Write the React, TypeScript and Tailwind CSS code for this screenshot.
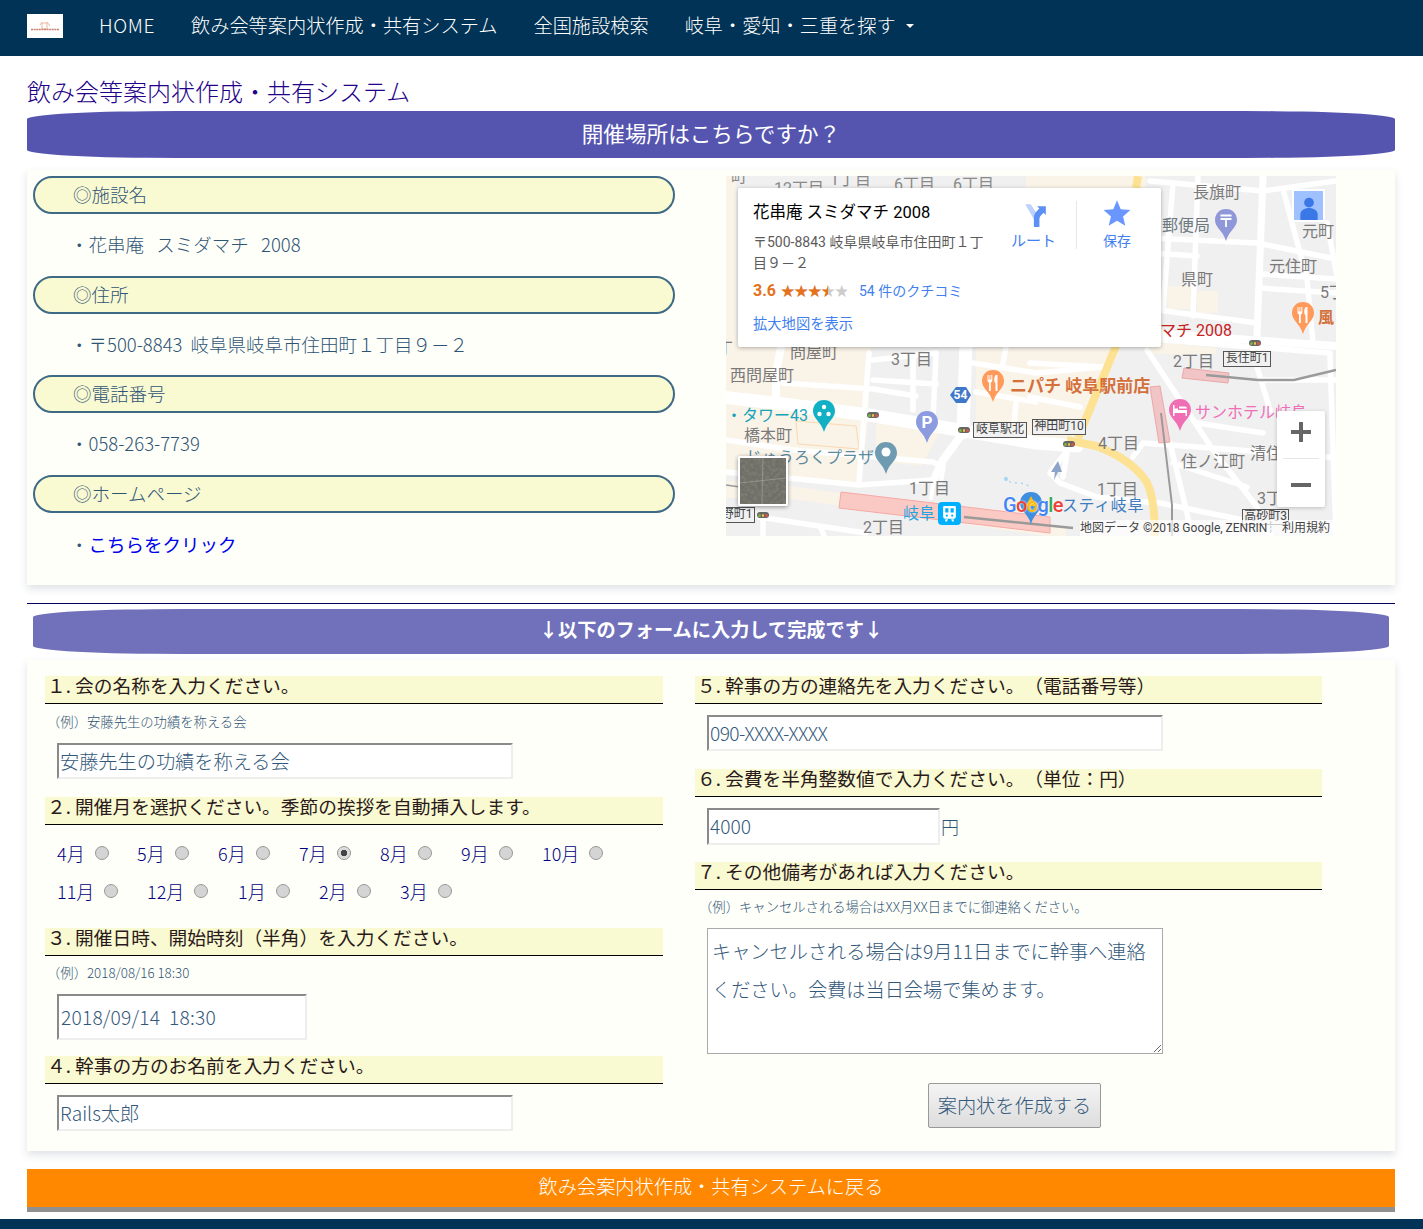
const jp = "font-['Noto_Sans_CJK_JP','Liberation_Sans',sans-serif]"

const navItems = ['飲み会等案内状作成・共有システム', '全国施設検索']

const facility = [
	{ title: '◎施設名', value: '・花串庵   スミダマチ   2008' },
	{ title: '◎住所', value: '・〒500-8843  岐阜県岐阜市住田町１丁目９－２' },
	{ title: '◎電話番号', value: '・058-263-7739' },
]

const months = [
	[
		{ label: '4月', w: 'w-[80px]' },
		{ label: '5月', w: 'w-[81px]' },
		{ label: '6月', w: 'w-[81px]' },
		{ label: '7月', w: 'w-[81px]', checked: true },
		{ label: '8月', w: 'w-[81px]' },
		{ label: '9月', w: 'w-[81px]' },
		{ label: '10月', w: 'w-[90px]' },
	],
	[
		{ label: '11月', w: 'w-[90px]' },
		{ label: '12月', w: 'w-[91px]' },
		{ label: '1月', w: 'w-[81px]' },
		{ label: '2月', w: 'w-[81px]' },
		{ label: '3月', w: 'w-[81px]' },
	],
]

const mapLabels = [
	{ text: '町', c: 'left-[5px] top-[-9px] text-[#8a8a8a]' },
	{ text: '丁', c: 'left-[-9px] top-[163px] text-[#7a7a7a]' },
	{ text: '12丁目', c: 'left-[48px] top-[3px] text-[#8a8a8a]' },
	{ text: '1丁目', c: 'left-[104px] top-[-6px] text-[#8a8a8a]' },
	{ text: '6丁目', c: 'left-[168px] top-[-1px] text-[#8a8a8a]' },
	{ text: '6丁目', c: 'left-[227px] top-[-1px] text-[#8a8a8a]' },
	{ text: '長旗町', c: 'left-[467px] top-[7px] text-[#7a7a7a]' },
	{ text: '郵便局', c: 'left-[436px] top-[40px] text-[#6c7a80]' },
	{ text: '元町', c: 'left-[576px] top-[46px] text-[#7a7a7a]' },
	{ text: '元住町', c: 'left-[543px] top-[81px] text-[#7a7a7a]' },
	{ text: '県町', c: 'left-[455px] top-[94px] text-[#7a7a7a]' },
	{ text: '5丁', c: 'left-[594px] top-[107px] text-[#7a7a7a]' },
	{ text: '風', c: 'left-[592px] top-[132px] text-[#d4703a] font-bold' },
	{ text: 'マチ 2008', c: 'left-[434px] top-[145px] text-[#c5221f]' },
	{ text: '問屋町', c: 'left-[64px] top-[167px] text-[#7a7a7a]' },
	{ text: '3丁目', c: 'left-[165px] top-[174px] text-[#7a7a7a]' },
	{ text: '2丁目', c: 'left-[447px] top-[176px] text-[#7a7a7a]' },
	{ text: '西問屋町', c: 'left-[4px] top-[190px] text-[#7a7a7a]' },
	{ text: 'ニパチ 岐阜駅前店', c: 'left-[284px] top-[200px] text-[#d4703a] font-bold text-[17px]' },
	{ text: '・タワー43', c: 'left-[0px] top-[230px] text-[#16a3b8]' },
	{ text: '橋本町', c: 'left-[18px] top-[250px] text-[#7a7a7a]' },
	{ text: 'じゅうろくプラザ', c: 'left-[20px] top-[272px] text-[#5d8a9e]' },
	{ text: '4丁目', c: 'left-[372px] top-[258px] text-[#7a7a7a]' },
	{ text: 'サンホテル岐阜', c: 'left-[469px] top-[227px] text-[#ee6fb8]' },
	{ text: '住ノ江町', c: 'left-[455px] top-[276px] text-[#7a7a7a]' },
	{ text: '清住', c: 'left-[524px] top-[268px] text-[#7a7a7a]' },
	{ text: '1丁目', c: 'left-[183px] top-[303px] text-[#7a7a7a]' },
	{ text: '1丁目', c: 'left-[371px] top-[304px] text-[#7a7a7a]' },
	{ text: '3丁', c: 'left-[531px] top-[313px] text-[#7a7a7a]' },
	{ text: '2丁目', c: 'left-[137px] top-[342px] text-[#7a7a7a]' },
	{ text: '岐阜', c: 'left-[177px] top-[328px] text-[#25a4e0]' },
	{ text: 'スティ岐阜', c: 'left-[336px] top-[320px] text-[#3f7cc0] tracking-[0.6px]' },
]

const mapBoxes = [
	{ text: '長住町1', c: 'left-[497px] top-[175px] w-[48px]' },
	{ text: '岐阜駅北', c: 'left-[247px] top-[246px] w-[54px]' },
	{ text: '神田町10', c: 'left-[306px] top-[243px] w-[54px]' },
	{ text: '野町1', c: 'left-[-7px] top-[331px] w-[36px]' },
	{ text: '高砂町3', c: 'left-[516px] top-[333px] w-[47px]' },
]

const signals = [
	'left-[141px] top-[236px]',
	'left-[232px] top-[251px]',
	'left-[337px] top-[265px]',
	'left-[31px] top-[336px]',
	'left-[523px] top-[164px]',
]

function Pin({ color, className, children }: { color: string; className: string; children?: React.ReactNode }) {
	return (
		<svg viewBox="0 0 24 34" className={`absolute w-[24px] h-[34px] ${className}`}>
			<path d="M12 1C5.500 1 1 5.800 1 12c0 7.500 8 10.500 11 21 3-10.500 11-13.500 11-21C23 5.800 18.500 1 12 1z" fill={color} />
			{children}
		</svg>
	)
}

function Fork() {
	return <path d="M6.500 6v5.500a2 2 0 0 0 1.500 2V22h1.800v-8.500a2 2 0 0 0 1.500-2V6h-1v4.500h-1V6h-.8v4.500h-1V6zM15 6c-2 1.500-2.500 6-.5 8.500V22h2V6z" fill="#fff" />
}

function MapRoads() {
	return (
		<svg viewBox="0 0 610 360" className="absolute inset-0 w-full h-full">
			<rect width="610" height="360" fill="#f0f0f0" />
			{/* built up blocks */}
			<g fill="#faf3e8">
				<path d="M0 164 L145 164 L143 240 L133 308 L60 300 L0 300z" />
				<path d="M250 172 L395 172 L352 262 L300 262 L285 262 L250 250z" />
				<path d="M150 245 L215 255 L195 290 L150 285z" />
				<path d="M0 305 L64 310 L340 350 L340 360 L320 360 L60 322 L0 322z" />
				<path d="M441 110 L467 110 L467 133 L441 133z" />
				<path d="M471 115 L492 115 L492 137 L471 137z" />
				<path d="M424 165 L490 172 L490 178 L424 178z" />
				<path d="M0 0 L10 0 L10 170 L0 170z" />
				<path d="M300 0 L420 0 L420 12 L300 12z" />
			</g>
			<path d="M70 245 L130 250 L133 273 L72 268z" fill="none" stroke="#fbd9b0" />
			<g stroke="#ffffff" fill="none" strokeLinejoin="round" strokeLinecap="round">
				<g strokeWidth="13">
					<path d="M-5 221 L50 227 L143 239 L233 254 L310 267 L351 270" />
					<path d="M240 165 L237 257" />
				</g>
				<g strokeWidth="8">
					<path d="M55 171 L50 197 L50 227" />
					<path d="M237 257 L217 284 L208 304" />
					<path d="M424 157 L610 170" />
				</g>
				<g strokeWidth="5.500">
					<path d="M0 264 L67 274 L150 281 L207 286 L215 290" />
					<path d="M143 177 L133 307" />
					<path d="M0 296 L133 309 L207 304" />
					<path d="M57 207 L147 213 L190 220" />
					<path d="M147 184 L210 177 M147 204 L210 208" />
					<path d="M187 181 L187 234 M210 177 L207 244" />
					<path d="M247 187 L310 197 L377 191 M280 171 L277 187" />
					<path d="M304 221 L354 231 M250 216 L310 226 M290 227 L287 257" />
					<path d="M304 187 L377 191" />
					<path d="M33 341 L140 357 M37 344 L37 360 M95 352 L98 360" />
					<path d="M421 174 L487 274 L531 331 L545 360" />
					<path d="M531 191 L544 234" />
					<path d="M407 281 L417 267 L554 277 L610 282" />
					<path d="M444 267 L461 337 L465 360" />
					<path d="M447 287 L521 311 M434 327 L517 344 L610 350 M471 247 L537 257" />
					<path d="M344 271 L324 297 L334 307 L371 321 L431 327" />
					<path d="M341 277 L337 301" />
					<path d="M437 164 L604 177 M534 204 L610 204" />
					<path d="M604 180 L610 360" />
					<path d="M424 5 L537 15 L610 5" />
					<path d="M447 7 L437 133 M472 0 L467 140 M557 13 L581 103 L587 167 M601 47 L611 100" />
					<path d="M424 62 L531 67 L610 83 M424 77 L471 80 M534 98 L610 103 M534 112 L610 117 M424 133 L531 147" />
				</g>
				<path d="M537 0 L531 160 L527 172" strokeWidth="7" />
				<path d="M208 304 L205 322 M218 290 L215 306" strokeWidth="4" />
			</g>
			<g stroke="#fde293" strokeWidth="8" fill="none" strokeLinejoin="round">
				<path d="M412 0 L410 12" />
				<path d="M392 165 L352 262" />
				<path d="M341 264 L370 270 Q405 283 420 305 Q429 320 429 362" />
			</g>
			<g strokeWidth="1">
				<path d="M115 316 L324 341 L324 357 L113 332z" fill="#fbc9c3" stroke="#f4a9a4" />
				<path d="M458 192 L503 197 L502 207 L456 202z" fill="#f1c5c5" stroke="#eaa8a8" />
				<path d="M424 211 L434 210 L444 266 L433 267z" fill="#f1c5c5" stroke="#eaa8a8" />
			</g>
			<g fill="none" stroke="#9a9a9a">
				<path d="M238 341 L347 352" strokeWidth="2.500" />
				<path d="M480 199 L532 204 L568 204 L610 194" strokeWidth="2.500" />
				<path d="M435 237 L446 329 L446 360" strokeWidth="2" />
				<path d="M0 309 L14 311" strokeWidth="1.500" />
			</g>
			<path d="M332 285 L325 296 L329 296 L328 304 L332 296 L336 296z" fill="#8ea3c9" />
			<path d="M279 301 Q282 306 288 307 Q298 306 306 312" stroke="#a8d4f2" strokeWidth="1.500" strokeDasharray="2 4" fill="none" />
			<circle cx="280" cy="303" r="2" fill="#a8d4f2" />
			<path d="M224 219 L230 211 L240 211 L245 219 L240 227 L230 227z" fill="#3f78c8" />
		</svg>
	)
}

function GoogleMap() {
	return (
		<div className="relative w-[610px] h-[360px] shrink-0 overflow-hidden font-['Roboto','Noto_Sans_CJK_JP',sans-serif] font-normal">
			<MapRoads />

			{mapLabels.map(({ text, c }, index) => (
				<span key={index} className={`absolute whitespace-nowrap text-[16px] leading-[20px] ${c}`}>
					{text}
				</span>
			))}
			{mapBoxes.map(({ text, c }, index) => (
				<span key={index} className={`absolute h-[16px] bg-[#f1f1f1] border-[1.5px] border-[#555] text-[#444] text-[12px] leading-[13px] text-center whitespace-nowrap ${c}`}>
					{text}
				</span>
			))}
			{signals.map((c, index) => (
				<span key={index} className={`absolute w-[12px] h-[6px] rounded-full bg-[#666] flex items-center justify-center gap-px ${c}`}>
					<span className="w-[2.500px] h-[3px] rounded-full bg-[#7cb342]" />
					<span className="w-[2.500px] h-[3px] rounded-full bg-[#e8c547]" />
					<span className="w-[2.500px] h-[3px] rounded-full bg-[#d9534f]" />
				</span>
			))}

			<span className="absolute left-[224px] w-[21px] text-center top-[213px] text-white text-[12px] leading-[12px] font-bold">54</span>

			<Pin color="#8f97d8" className="left-[488px] top-[32px]">
				<path d="M6.500 7.500h11M6.500 11h11M12 11v8" stroke="#fff" strokeWidth="1.800" fill="none" />
			</Pin>
			<Pin color="#ff9a5a" className="left-[565px] top-[125px]"><Fork /></Pin>
			<Pin color="#ff9a5a" className="left-[255px] top-[193px]"><Fork /></Pin>
			<Pin color="#12b0c4" className="left-[86px] top-[223px]">
				<circle cx="12" cy="8" r="2.200" fill="#fff" />
				<circle cx="7.500" cy="15" r="2.200" fill="#fff" />
				<circle cx="16.500" cy="15" r="2.200" fill="#fff" />
			</Pin>
			<Pin color="#8c9be0" className="left-[189px] top-[234px]">
				<text x="12" y="18" textAnchor="middle" fontSize="17" fontWeight="700" fill="#fff">P</text>
			</Pin>
			<Pin color="#6f9bb0" className="left-[148px] top-[265px]">
				<circle cx="12" cy="11" r="4.500" fill="#fff" />
			</Pin>
			<Pin color="#f06fb4" className="left-[442px] top-[222px]">
				<path d="M5 7v11h1.500v-3h11v3H19v-6h-9v-1.500H6.500V7zM11 8.500h6a2 2 0 0 1 2 2H11z" fill="#fff" />
			</Pin>
			<Pin color="#3f8fe0" className="left-[293px] top-[315px]">
				<path d="M12 5l5 10H7z" fill="#fbbc05" />
			</Pin>

			<div className="absolute left-[212px] top-[326px] w-[23px] h-[23px] rounded-[4px] bg-[#00b0ff] flex items-center justify-center">
				<svg viewBox="0 0 16 16" className="w-[17px] h-[17px]">
					<path d="M3 1h10a1 1 0 0 1 1 1v9a2 2 0 0 1-2 2H4a2 2 0 0 1-2-2V2a1 1 0 0 1 1-1zM4 3v4h3V3zM9 3v4h3V3z" fill="#fff" fillRule="evenodd" />
					<circle cx="5.500" cy="10" r="1" fill="#00b0ff" />
					<circle cx="10.500" cy="10" r="1" fill="#00b0ff" />
					<path d="M4 13.500h2.500L5.500 15.500H4zM12 13.500H9.500l1 2H12z" fill="#fff" />
				</svg>
			</div>

			{/* info window */}
			<div className="absolute left-[12px] top-[12px] w-[423px] h-[159px] bg-white shadow-[0_1px_4px_rgba(0,0,0,0.3)] rounded-[2px]">
				<p className="absolute left-[15px] top-[15px] text-[16.500px] leading-[20px] text-black whitespace-nowrap">花串庵 スミダマチ 2008</p>
				<p className="absolute left-[15px] top-[44px] w-[240px] text-[14px] leading-[21px] text-[#5b5b5b]">〒500-8843 岐阜県岐阜市住田町１丁目９－２</p>
				<p className="absolute left-[15px] top-[93px] text-[16px] leading-[20px] font-bold text-[#e7711b]">3.6</p>
				<div className="absolute left-[43px] top-[93px] text-[13.500px] leading-[20px] w-[66px] overflow-hidden whitespace-nowrap text-[#ccc]">
					<span>★★★★★</span>
					<span className="absolute left-0 top-0 w-[47px] overflow-hidden text-[#e7711b]">★★★★★</span>
				</div>
				<p className="absolute left-[121px] top-[93px] text-[14px] leading-[20px] text-[#427fed] whitespace-nowrap">54 件のクチコミ</p>
				<p className="absolute left-[15px] top-[126px] text-[14.300px] leading-[20px] text-[#427fed] whitespace-nowrap">拡大地図を表示</p>

				<svg viewBox="0 0 24 24" className="absolute left-[284px] top-[14px] w-[26px] h-[26px]">
					<path d="M3 2h5l8 12v9h-5v-7z" fill="#bcd2fb" />
					<path d="M11 23v-9c0-3 2-5 5-8l-2-2h8v8l-2-2c-2.500 2-4 4-4 6v7z" fill="#5c90f5" />
				</svg>
				<p className="absolute left-[273px] top-[43px] text-[15px] leading-[20px] text-[#427fed] whitespace-nowrap">ルート</p>
				<div className="absolute left-[338px] top-[13px] w-px h-[48px] bg-[#e8e8e8]" />
				<svg viewBox="0 0 24 24" className="absolute left-[365px] top-[11px] w-[28px] h-[28px]">
					<path d="M12 1l3.200 7.800 8.300.7-6.300 5.400 1.900 8.100L12 18.700 4.900 23l1.900-8.100L.5 9.500l8.300-.7z" fill="#6a97ff" />
				</svg>
				<p className="absolute left-[365px] top-[43px] text-[14px] leading-[20px] text-[#427fed] whitespace-nowrap">保存</p>
			</div>

			{/* pegman */}
			<div className="absolute left-[566px] top-[13px] w-[33px] h-[33px] bg-[#9fc1ff] border-[2px] border-white flex items-end justify-center">
				<svg viewBox="0 0 24 24" className="w-[26px] h-[26px]">
					<circle cx="12" cy="8" r="4.500" fill="#3b78e7" />
					<path d="M4 24v-5c0-4 4-6 8-6s8 2 8 6v5z" fill="#3b78e7" />
				</svg>
			</div>

			{/* zoom control */}
			<div className="absolute left-[551px] top-[235px] w-[48px] h-[96px] bg-white rounded-[2px] shadow-[0_1px_4px_rgba(0,0,0,0.2)] flex flex-col items-center">
				<svg viewBox="0 0 24 24" className="w-[24px] h-[24px] mt-[9px]">
					<path d="M10 2h4v8h8v4h-8v8h-4v-8H2v-4h8z" fill="#666" />
				</svg>
				<div className="w-[36px] h-px bg-[#e6e6e6] mt-[14px]" />
				<svg viewBox="0 0 24 24" className="w-[24px] h-[24px] mt-[14px]">
					<path d="M2 10h20v4H2z" fill="#666" />
				</svg>
			</div>

			{/* satellite thumbnail */}
			<div className="absolute left-[12px] top-[280px] w-[50px] h-[50px] border-[2px] border-white rounded-[2px] overflow-hidden shadow-[0_1px_4px_rgba(0,0,0,0.4)]">
				<svg viewBox="0 0 46 46" className="w-full h-full">
					<filter id="sat">
						<feTurbulence type="fractalNoise" baseFrequency="0.28" numOctaves="2" seed="7" />
						<feColorMatrix values="0 0 0 0 0.16  0 0 0 0 0.16  0 0 0 0 0.14  3 0 0 0 -0.8" />
					</filter>
					<rect width="46" height="46" fill="#7c7c70" />
					<rect width="46" height="46" filter="url(#sat)" />
					<path d="M23 0 L22 46 M0 25 L46 20" stroke="#a8a89c" strokeWidth="0.600" />
				</svg>
			</div>

			{/* google logo + attribution */}
			<span className="absolute left-[277px] top-[316px] text-[20px] leading-[26px] font-medium tracking-[-0.600px] [text-shadow:0_0_2px_#fff]">
				<span className="text-[#4285f4]">G</span>
				<span className="text-[#ea4335]">o</span>
				<span className="text-[#fbbc05]">o</span>
				<span className="text-[#4285f4]">g</span>
				<span className="text-[#34a853]">l</span>
				<span className="text-[#ea4335]">e</span>
			</span>
			<div className="absolute right-0 bottom-0 h-[16px] w-[256px] bg-white/70 text-[12px] leading-[16px] text-[#444] flex justify-between pr-[6px] whitespace-nowrap">
				<span>地図データ ©2018 Google, ZENRIN</span>
				<span className="text-[#888] -ml-[8px]">┆</span>
				<span>利用規約</span>
			</div>
		</div>
	)
}

function Question({ num, children }: { num: string; children: React.ReactNode }) {
	return (
		<h3 className="h-[28px] bg-[#f9f9d2] border-b border-black pl-[2px] text-[18.72px] leading-[18px] font-normal text-[#2a1a1a] whitespace-nowrap">
			{num}<span className="inline-block w-[9.360px]">.</span>{children}
		</h3>
	)
}

function Hint({ children, className }: { children: React.ReactNode; className: string }) {
	return <p className={`text-[13.33px] leading-[18px] text-[#2f5575] ${className}`}>{children}</p>
}

const inputCls = `block border-2 border-t-[#8a8a8a] border-l-[#8a8a8a] border-r-[#eeeeee] border-b-[#eeeeee] bg-white text-[#33587a] text-[19.2px] outline-none px-px [text-spacing-trim:space-all] ${jp}`

export default function App() {
	return (
		<div className={`bg-white min-h-[1229px] font-light [text-spacing-trim:space-all] ${jp}`}>
			<nav className="h-[56px] pb-[4px] bg-[#003355] flex items-center pl-[27px] text-white text-[19.2px]">
				<div className="w-[36px] h-[24px] bg-white flex flex-col items-center justify-center">
					<svg viewBox="0 0 36 24" className="w-[36px] h-[24px]">
						<path d="M15 9h5v6h-5zM13 11l2-3M20 8l3 4" stroke="#e8a58c" strokeWidth="0.800" fill="none" />
						<path d="M4 15.500h28" stroke="#c97f6e" strokeWidth="1.300" strokeDasharray="2 0.600" />
					</svg>
				</div>
				<a className="ml-[36px] -mt-[2px] tracking-[0.6px]">HOME</a>
				{navItems.map((label, index) => (
					<a key={index} className="ml-[36px] -mt-[2px] whitespace-nowrap">{label}</a>
				))}
				<a className="ml-[36px] -mt-[2px] whitespace-nowrap flex items-center">
					岐阜・愛知・三重を探す
					<span className="ml-[10px] mt-[2px] w-0 h-0 border-x-[4px] border-x-transparent border-t-[4px] border-t-white" />
				</a>
			</nav>

			<main className="pl-[27px] pr-[28px] pt-[20px]">
				<h1 className="text-[24px] leading-[29px] mb-[6px] text-[#220088]">飲み会等案内状作成・共有システム</h1>

				<h2 className="h-[47px] pb-[2px] bg-[#5555b0] rounded-[150px/8px] flex items-center justify-center text-white font-normal text-[21.6px]">
					開催場所はこちらですか？
				</h2>

				<section className="mt-[12px] h-[415px] bg-[#fffffa] shadow-[0_4px_8px_rgba(40,60,90,0.15)] flex pt-[6px] pl-[6px]">
					<div className="w-[642px] shrink-0 text-[#2f5575] text-[18.5px]">
						{facility.map(({ title, value }, index) => (
							<div key={index} className="h-[99.5px]">
								<div className="h-[38px] bg-[#f9f9d2] border-2 border-[#3e6a85] rounded-full pl-[38px] flex items-center">{title}</div>
								<p className="pl-[37px] mt-[19px] leading-[22px] whitespace-pre">{value}</p>
							</div>
						))}
						<div className="h-[38px] bg-[#f9f9d2] border-2 border-[#3e6a85] rounded-full pl-[38px] flex items-center">◎ホームページ</div>
						<p className="pl-[37px] mt-[20px] leading-[22px]">
							・<a className="text-[#0000ee] font-normal">こちらをクリック</a>
						</p>
					</div>
					<div className="ml-[51px]">
						<GoogleMap />
					</div>
				</section>

				<hr className="mt-[18px] border-[#000060]" />

				<h2 className="mx-[6px] mt-[5px] h-[45px] pb-[4px] bg-[#7070bb] rounded-[150px/8px] flex items-center justify-center text-white font-bold text-[19.2px]">
					↓以下のフォームに入力して完成です↓
				</h2>

				<section className="mt-[6px] h-[491px] bg-[#fffffa] shadow-[0_4px_8px_rgba(40,60,90,0.15)] flex pt-[16px] pl-[18px]">
					<div className="w-[618px] shrink-0">
						<Question num="１">会の名称を入力ください。</Question>
						<Hint className="mt-[9px] ml-[2px]">（例）安藤先生の功績を称える会</Hint>
						<input readOnly value="安藤先生の功績を称える会" className={`${inputCls} mt-[12px] ml-[12px] w-[456px] h-[36px]`} />

						<div className="mt-[18px]">
							<Question num="２">開催月を選択ください。季節の挨拶を自動挿入します。</Question>
						</div>
						<div className="mt-[10px] ml-[12px] text-[#000080] text-[18px]">
							{months.map((row, rowIndex) => (
								<div key={rowIndex} className="flex">
									{row.map(({ label, w, checked }) => (
										<label key={label} className={`flex items-center gap-[10px] h-[38px] ${w}`}>
											<span className="-mt-[2px]">{label}</span>
											<input
												type="radio"
												name="month"
												defaultChecked={checked}
												className="appearance-none w-[14px] h-[14px] mb-[3px] rounded-full border border-[#999] bg-[#d4d4d4] checked:bg-[radial-gradient(circle,#444_35%,#ddd_42%)]"
											/>
										</label>
									))}
								</div>
							))}
						</div>

						<div className="mt-[17px]">
							<Question num="３">開催日時、開始時刻（半角）を入力ください。</Question>
						</div>
						<Hint className="mt-[8px] ml-[2px]">（例）2018/08/16 18:30</Hint>
						<input readOnly value="2018/09/14  18:30" className={`${inputCls} mt-[12px] ml-[12px] w-[250px] h-[46px] pl-[2px] tracking-[0.2px]`} />

						<div className="mt-[16px]">
							<Question num="４">幹事の方のお名前を入力ください。</Question>
						</div>
						<input readOnly value="Rails太郎" className={`${inputCls} mt-[11px] ml-[12px] w-[456px] h-[36px]`} />
					</div>

					<div className="ml-[32px] w-[627px] shrink-0">
						<Question num="５">幹事の方の連絡先を入力ください。（電話番号等）</Question>
						<input readOnly value="090-XXXX-XXXX" className={`${inputCls} mt-[11px] ml-[12px] w-[456px] h-[36px] tracking-[-0.6px]`} />

						<div className="mt-[18px]">
							<Question num="６">会費を半角整数値で入力ください。（単位：円）</Question>
						</div>
						<div className="mt-[11px] ml-[12px] flex items-center text-[#2f5575] text-[18px]">
							<input readOnly value="4000" className={`${inputCls} w-[233px] h-[37px] pb-[2px]`} />
							<span className="ml-px">円</span>
						</div>

						<div className="mt-[17px]">
							<Question num="７">その他備考があれば入力ください。</Question>
						</div>
						<Hint className="mt-[8px] ml-[4px]">（例）キャンセルされる場合はXX月XX日までに御連絡ください。</Hint>
						<textarea
							readOnly
							value="キャンセルされる場合は9月11日までに幹事へ連絡ください。会費は当日会場で集めます。"
							className={`block mt-[12px] ml-[12px] w-[456px] h-[126px] bg-white border border-[#aaaaaa] text-[#33587a] text-[19.2px] leading-[38px] pt-[3px] px-[4px] outline-none [text-spacing-trim:space-all] ${jp}`}
						/>
						<div className="ml-[233px] mt-[29px]">
							<button className="w-[173px] h-[45px] rounded-[2px] border border-[#999] bg-gradient-to-b from-[#f4f4f4] to-[#dddddd] text-[#33587a] text-[19.2px]">
								案内状を作成する
							</button>
						</div>
					</div>
				</section>

				<a className="mt-[18px] h-[43px] pb-[4px] bg-[#ff8800] border-b-[5px] border-[#909090] flex items-center justify-center text-white text-[19.2px]">
					飲み会案内状作成・共有システムに戻る
				</a>
			</main>

			<footer className="mt-[7px] h-[10px] bg-[#003355]" />
		</div>
	)
}
